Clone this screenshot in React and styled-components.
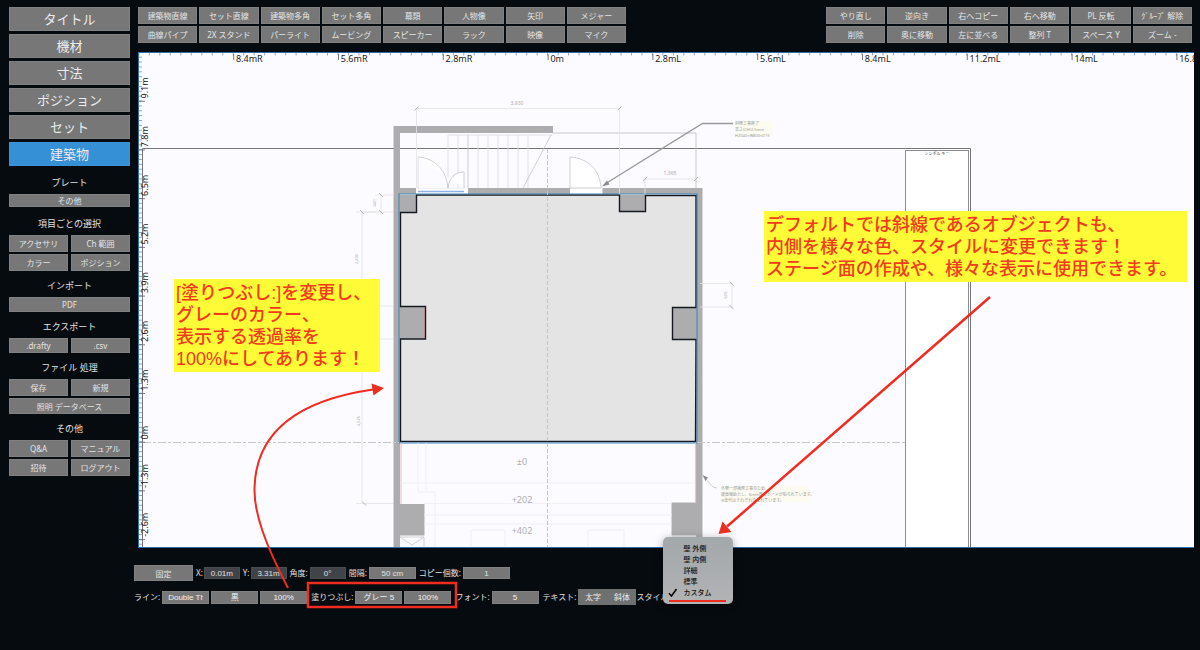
import { useState } from "react";
import styled, { createGlobalStyle } from "styled-components";

const GlobalStyle = createGlobalStyle`
	* {
		box-sizing: border-box;
	}
	body {
		margin: 0;
		background: #060b0f;
	}
	button,
	input,
	select {
		font-family: inherit;
		margin: 0;
	}
`;

const Page = styled.div`
	position: relative;
	display: flex;
	gap: 4px;
	min-height: 100vh;
	padding: 7px 6px 0 9px;
	background: #060b0f;
	color: #e0e0e0;
	font-family: "Noto Sans", "Noto Sans CJK JP", sans-serif;
	font-size: 8px;
	overflow: hidden;
`;

const Sidebar = styled.nav`
	flex: 0 0 121px;
`;

const Tabs = styled.div`
	display: grid;
	gap: 3px;
`;

const Tab = styled.button`
	height: 24px;
	padding: 0;
	border: 1px solid ${({ $active }) => ($active ? "#3a93d8" : "#808080")};
	background: ${({ $active }) => ($active ? "#3690d6" : "#777777")};
	color: #ececec;
	font-size: 13px;
	line-height: 18px;
	cursor: pointer;
`;

const SectionTitle = styled.h2`
	margin: 0;
	padding-top: ${({ $roomy }) => ($roomy ? "6px" : "4px")};
	font-size: 9px;
	font-weight: 400;
	line-height: 22px;
	text-align: center;
`;

const SectionGrid = styled.div`
	display: grid;
	grid-template-columns: 1fr 1fr;
	gap: 2px 3px;
`;

const Button = styled.button`
	height: ${({ $height }) => $height || 17}px;
	grid-column: ${({ $wide }) => ($wide ? "1 / -1" : "auto")};
	min-width: 0;
	padding: 0;
	border: 1px solid #808080;
	background: #777777;
	color: #e4e4e4;
	font-size: 8px;
	line-height: 11px;
	white-space: nowrap;
	cursor: pointer;
`;

const Main = styled.main`
	flex: 1;
	min-width: 0;
	display: flex;
	flex-direction: column;
`;

const Toolbar = styled.div`
	display: grid;
	grid-template-columns: 488fr 200fr 366fr;
	padding: 0 2px 0 4px;
	margin-bottom: 9px;
`;

const ToolGroup = styled.div`
	grid-column: ${({ $column }) => $column};
	display: grid;
	grid-template-columns: repeat(${({ $count }) => $count}, 1fr);
	gap: 2px;
`;

const Canvas = styled.section`
	flex: 1;
	min-height: 0;
	margin-left: 4px;
	border: 1px solid #2f6fae;
	border-right: none;
	background: #fcfbff;
	overflow: hidden;

	svg {
		display: block;
		width: 100%;
	}
`;

const Properties = styled.div`
	display: grid;
	gap: 8px;
	padding: 17px 0 45px;
`;

const PropertyRow = styled.div`
	display: flex;
	align-items: center;
	gap: ${({ $gap }) => $gap}px;
	height: 16px;
`;

const Field = styled.div`
	display: flex;
	align-items: center;
	gap: ${({ $tight }) => ($tight ? 1 : 2)}px;
	flex: none;
	line-height: 12px;
	white-space: nowrap;
`;

const TextBox = styled.input`
	width: ${({ $wide }) => ($wide ? 47 : 36)}px;
	height: 12px;
	padding: 0;
	border: 1px solid ${({ $wide }) => ($wide ? "#808080" : "#484c51")};
	background: ${({ $wide }) => ($wide ? "#777777" : "#404449")};
	color: #e0e0e0;
	font-family: "Liberation Sans", "Noto Sans CJK JP", sans-serif;
	font-size: 8px;
	text-align: center;
`;

const Select = styled.select`
	appearance: none;
	width: 47px;
	height: 13px;
	padding: 0 5px;
	border: 1px solid #808080;
	border-radius: 0;
	background: #777777;
	color: #f2f2f2;
	font-family: "Liberation Sans", "Noto Sans CJK JP", sans-serif;
	font-size: 8px;
	text-align: center;
	text-align-last: center;
`;

const PinButton = styled(Button)`
	width: 59px;
	height: 16px;
`;

const Toggles = styled.div`
	display: flex;
`;

const Toggle = styled.button`
	width: 29px;
	height: 16px;
	padding: 0;
	border: none;
	background: #6f7070;
	color: #ececec;
	font-size: 8px;
	line-height: 16px;
`;

const StyleField = styled.div`
	position: relative;
	display: flex;
	align-items: center;
	gap: 2px;
	margin-left: -4px;
	line-height: 12px;
`;

const Menu = styled.div`
	position: absolute;
	left: 27px;
	bottom: -1px;
	width: 70px;
	padding: 6px 0;
	border-radius: 5px;
	background: linear-gradient(#a3a8ab, #b2b3b5);
	box-shadow: 0 2px 8px rgba(0, 0, 0, 0.35);
`;

const MenuItem = styled.button`
	position: relative;
	display: block;
	width: 100%;
	height: 11px;
	padding: 0 0 0 20px;
	border: none;
	background: none;
	color: #111111;
	font-size: 7px;
	font-weight: 500;
	line-height: 11px;
	text-align: left;

	svg {
		position: absolute;
		left: 5px;
		top: 1px;
	}
`;

const Note = styled.p`
	position: absolute;
	left: ${({ $left }) => $left}px;
	top: ${({ $top }) => $top}px;
	width: ${({ $width }) => $width}px;
	margin: 0;
	padding: 3px 2px 2px;
	background: #fffb36;
	color: #f23a1d;
	font-family: "Liberation Sans", "Noto Sans CJK JP", sans-serif;
	font-size: 18px;
	font-weight: 500;
	line-height: 22px;
	white-space: nowrap;
`;

const Overlay = styled.svg`
	position: absolute;
	left: 0;
	top: 0;
	pointer-events: none;
`;

const tabs = ["タイトル", "機材", "寸法", "ポジション", "セット", "建築物"];

const sections = [
	{ title: "プレート", roomy: true, items: [{ label: "その他", wide: true, height: 13 }] },
	{
		title: "項目ごとの選択",
		roomy: true,
		items: [
			{ label: "アクセサリ" },
			{ label: "Ch 範囲" },
			{ label: "カラー" },
			{ label: "ポジション" },
		],
	},
	{ title: "インポート", items: [{ label: "PDF", wide: true, height: 15 }] },
	{
		title: "エクスポート",
		items: [
			{ label: ".drafty", height: 15 },
			{ label: ".csv", height: 15 },
		],
	},
	{
		title: "ファイル 処理",
		items: [
			{ label: "保存" },
			{ label: "新規" },
			{ label: "照明 データベース", wide: true, height: 16 },
		],
	},
	{
		title: "その他",
		items: [
			{ label: "Q&A" },
			{ label: "マニュアル" },
			{ label: "招待" },
			{ label: "ログアウト" },
		],
	},
];

const drawTools = [
	"建築物直線", "セット直線", "建築物多角", "セット多角", "幕類", "人物像", "矢印", "メジャー",
	"曲線パイプ", "2X スタンド", "パーライト", "ムービング", "スピーカー", "ラック", "映像", "マイク",
];

const editTools = [
	"やり直し", "逆向き", "右へコピー", "右へ移動", "PL 反転", "ｸﾞﾙｰﾌﾟ 解除",
	"削除", "奥に移動", "左に並べる", "整列 T", "スペース Y", "ズーム -",
];

const styleOptions = ["壁 外側", "壁 内側", "詳細", "標準", "カスタム"];

const topLabels = ["8.4mR", "5.6mR", "2.8mR", "0m", "2.8mL", "5.6mL", "8.4mL", "11.2mL", "14mL", "16.8mL"];
const sideLabels = ["9.1m", "7.8m", "6.5m", "5.2m", "3.9m", "2.6m", "1.3m", "0m", "-1.3m", "-2.6m"];

function Rulers() {
	const topTicks = Array.from({ length: 101 }, (_, i) => 138.9 + i * 10.48);
	const sideTicks = Array.from({ length: 101 }, (_, i) => 57.2 + i * 4.87);

	return (
		<g fontSize="9" fill="#1c1c1c">
			{topTicks.map((x) => (
				<path key={x} d={`M${x} 53v2.5`} stroke="#6f8aa8" strokeWidth="0.7" />
			))}
			{sideTicks.map((y) => (
				<path key={y} d={`M139 ${y}h3`} stroke="#6f7f98" strokeWidth="0.7" />
			))}
			{topLabels.map((label, i) => (
				<g key={label}>
					<path d={`M${233.7 + i * 104.8} 54v6`} stroke="#555" strokeWidth="0.8" />
					<text x={236 + i * 104.8} y="61.5">
						{label}
					</text>
				</g>
			))}
			{sideLabels.map((label, i) => (
				<g key={label}>
					<path d={`M139 ${101.3 + i * 48.7}h6`} stroke="#666" strokeWidth="0.8" />
					<text transform={`translate(147.5 ${98.5 + i * 48.7}) rotate(-90)`}>{label}</text>
				</g>
			))}
		</g>
	);
}

function FloorPlan() {
	return (
		<svg viewBox="139 53 1055 494" preserveAspectRatio="xMinYMin slice">
			{/* sheet frame and symbol key */}
			<path d="M142.5 547V148.500H970.500V547M968.500 547V150" fill="none" stroke="#77777b" />
			<rect x="905.5" y="150.5" width="63" height="420" fill="#fff" stroke="#8d8d92" />
			<text x="937" y="155" fontSize="4" textAnchor="middle" fill="#444">
				シンボル キー
			</text>

			{/* stairs and doors */}
			<g fill="none" stroke="#dcdbe0" strokeWidth="0.8">
				<path d="M448 135H552M448 135V188M458 135V188M478 135V188M488 135V188M498 135V188M508 135V188M518 135V188M528 135V188" />
				<path d="M468 135V188" stroke="#c4c4c8" />
				<path d="M551 135L522 190" stroke="#c4c4c8" />
				<path d="M418 157C436 158 447 172 448 188C449 178 455 172 464 172V188" stroke="#c4c4c8" fill="#fff" />
				<path d="M418 157V189H466" />
				<path d="M570 157C588 158 600 170 601 188H570Z" stroke="#c4c4c8" fill="#fff" />
				<path d="M553 133H696V190" stroke="#bbbbc0" />
			</g>

			{/* walls */}
			<g fill="#adadaf">
				<path d="M393.5 126H553V133H400V188H416V194H400V547H393.5Z" />
				<path d="M468 188H570V194H468Z" />
				<path d="M602.5 188H702.5V538H696V194H602.5Z" />
				<path d="M400 504H424.5V535.5H400ZM671.5 502.5H696V535.5H671.5Z" />
			</g>
			<path d="M416 189H468V194H416ZM570 189H602V194H570Z" fill="#fff" />
			<path d="M418 191.5H464" stroke="#8fb1e8" strokeWidth="1.5" />

			{/* pillars, then the stage area cut around them */}
			<path d="M400 195H417V213H400ZM619 195H646V212H619ZM400 306H426V339H400ZM672 307H696V340H672Z" fill="#adadaf" />
			<path
				d="M416.5 195H619.5V211.5H645.5V195.5H696V307.5H672.5V339.5H696L695.5 441.5H400.5V339H425.5V306.5H400.5V212.5H416.5Z"
				fill="#e4e4e4"
				stroke="#161a20"
				strokeWidth="1.4"
			/>
			<path d="M424.500 307.500V338" stroke="#b98483" strokeWidth="0.8" />
			<rect x="399" y="194" width="298" height="249" fill="none" stroke="#3c83b8" />

			{/* lower floor */}
			<path d="M401 443V504M695.5 443V503" stroke="#f3c4c6" strokeWidth="1.2" />
			<g fill="none" stroke="#efeef3" strokeWidth="0.8">
				<path d="M401 483H695M424 503.5H672M424 515H672M424 524H672M418 443V492H435V547M426 443V490M471 547V530H505V547M588 547V530H624V547" />
				<path d="M400 537H424V547M400 537L412 545L424 537" stroke="#c8c8cc" />
				<path d="M672 537H697V547" stroke="#c8c8cc" />
			</g>
			<g fontSize="9" fill="#adadb2" textAnchor="middle">
				<text x="522" y="465">±0</text>
				<text x="522" y="503">+202</text>
				<text x="522" y="534">+402</text>
			</g>

			{/* centre lines */}
			<path d="M547.5 149V547" stroke="#c4c4c9" strokeDasharray="4 2" fill="none" />
			<path d="M143 442.5H399M697 442.5H905" stroke="#c6c6cc" strokeDasharray="8 2 3 2" />

			{/* dimensions */}
			<g fill="none" stroke="#e3e2e8" strokeWidth="0.8">
				<path d="M416.5 188V108.5H619.5V194M645 194V179H697M381 195V212H362V501M356 503.5H393M375 195H393M356 212H393M362 306H393M362 339H393M700 283.5H732V307H700" />
			</g>
			<path
				d="M414.5 110.5l4-4M617.5 110.5l4-4M643 181l4-4M694 181l4-4M379 193l4 4M379 210l4 4M360 210l4 4M362 501.5l4 4M729.5 281.5l4 4M729.5 305l4 4"
				stroke="#b4b4ba"
			/>
			<g fontSize="4" fill="#aaaab0" textAnchor="middle">
				<text x="517" y="105" fontSize="5">3,930</text>
				<text x="670" y="175" fontSize="5">1,365</text>
				<text transform="translate(376 203) rotate(-90)">440</text>
				<text transform="translate(358 259) rotate(-90)">2,430</text>
				<text transform="translate(360 421) rotate(-90)">4,575</text>
				<text transform="translate(727 295) rotate(-90)">605</text>
			</g>

			{/* leader notes */}
			<rect x="735" y="121" width="38" height="15" fill="#fcfbf0" />
			<rect x="721" y="486" width="88" height="16" fill="#fdfbf0" />
			<path d="M733 123.5H702.5L605 184" fill="none" stroke="#97979c" strokeWidth="1.3" />
			<path d="M602 186.500L607 180.500L609.500 184.500Z" fill="#8b8b90" />
			<path d="M717 488L713 487L704 477" fill="none" stroke="#cfcfd4" />
			<path d="M702.500 475L708 477.500L705.500 481Z" fill="#8b8b90" />
			<g fontSize="4" fill="#9b9b98">
				<text x="735" y="125">斜壁工事終了</text>
				<text x="735" y="131">高さ(CH)2.5mm</text>
				<text x="735" y="137">H2040×W800×D15</text>
				<text x="721" y="490">外壁一部補修工事のため、</text>
				<text x="721" y="496">緩衝補助とし、6mm厚のボードが貼られています。</text>
				<text x="721" y="502">※塗代はそれぞれ含まれています。</text>
			</g>

			<Rulers />
		</svg>
	);
}

function PropertySelect({ label, options }) {
	return (
		<Select aria-label={label}>
			{options.map((option) => (
				<option key={option}>{option}</option>
			))}
		</Select>
	);
}

function StyleMenu({ value, onChange }) {
	return (
		<Menu>
			{styleOptions.map((option) => (
				<MenuItem key={option} onClick={() => onChange(option)}>
					{option === value && (
						<svg width="10" height="9" viewBox="0 0 10 9">
							<path d="M1 5.200L3.500 8L8.500 1" fill="none" stroke="#0b0b0b" strokeWidth="1.600" />
						</svg>
					)}
					{option}
				</MenuItem>
			))}
		</Menu>
	);
}

function App() {
	const [activeTab, setActiveTab] = useState("建築物");
	const [objectStyle, setObjectStyle] = useState("カスタム");

	return (
		<Page lang="ja">
			<GlobalStyle />
			<Sidebar>
				<Tabs>
					{tabs.map((tab) => (
						<Tab key={tab} $active={tab === activeTab} onClick={() => setActiveTab(tab)}>
							{tab}
						</Tab>
					))}
				</Tabs>
				{sections.map((section) => (
					<section key={section.title}>
						<SectionTitle $roomy={section.roomy}>{section.title}</SectionTitle>
						<SectionGrid>
							{section.items.map((item) => (
								<Button key={item.label} $wide={item.wide} $height={item.height}>
									{item.label}
								</Button>
							))}
						</SectionGrid>
					</section>
				))}
			</Sidebar>

			<Main>
				<Toolbar>
					<ToolGroup $column={1} $count={8}>
						{drawTools.map((tool) => (
							<Button key={tool}>{tool}</Button>
						))}
					</ToolGroup>
					<ToolGroup $column={3} $count={6}>
						{editTools.map((tool) => (
							<Button key={tool}>{tool}</Button>
						))}
					</ToolGroup>
				</Toolbar>

				<Canvas>
					<FloorPlan />
				</Canvas>

				<Properties>
					<PropertyRow $gap={3}>
						<PinButton>固定</PinButton>
						<Field $tight>
							<label htmlFor="pos-x">X:</label>
							<TextBox id="pos-x" defaultValue="0.01m" />
						</Field>
						<Field $tight>
							<label htmlFor="pos-y">Y:</label>
							<TextBox id="pos-y" defaultValue="3.31m" />
						</Field>
						<Field>
							<label htmlFor="angle">角度:</label>
							<TextBox id="angle" defaultValue="0°" />
						</Field>
						<Field>
							<label htmlFor="spacing">間隔:</label>
							<TextBox id="spacing" $wide defaultValue="50 cm" />
						</Field>
						<Field>
							<label htmlFor="copies">コピー個数:</label>
							<TextBox id="copies" $wide defaultValue="1" />
						</Field>
					</PropertyRow>
					<PropertyRow $gap={4}>
						<Field>
							<span>ライン:</span>
							<PropertySelect label="ライン 種類" options={["Double Thin"]} />
							<PropertySelect label="ライン カラー" options={["黒"]} />
							<PropertySelect label="ライン 透過率" options={["100%"]} />
						</Field>
						<Field>
							<span>塗りつぶし:</span>
							<PropertySelect label="塗りつぶし カラー" options={["グレー 5"]} />
							<PropertySelect label="塗りつぶし 透過率" options={["100%"]} />
						</Field>
						<Field>
							<span>フォント:</span>
							<PropertySelect label="フォント" options={["5"]} />
						</Field>
						<Field>
							<span>テキスト:</span>
							<Toggles>
								<Toggle>太字</Toggle>
								<Toggle>斜体</Toggle>
							</Toggles>
						</Field>
						<StyleField>
							<span>スタイル:</span>
							<StyleMenu value={objectStyle} onChange={setObjectStyle} />
						</StyleField>
					</PropertyRow>
				</Properties>
			</Main>

			<Note $left={174} $top={279} $width={206}>
				[塗りつぶし:]を変更し、
				<br />
				グレーのカラー、
				<br />
				表示する透過率を
				<br />
				100%にしてあります！
			</Note>
			<Note $left={764} $top={211} $width={423}>
				デフォルトでは斜線であるオブジェクトも、
				<br />
				内側を様々な色、スタイルに変更できます！
				<br />
				ステージ面の作成や、様々な表示に使用できます。
			</Note>

			<Overlay width="1200" height="650" viewBox="0 0 1200 650">
				<g fill="none" stroke="#ee2c20" strokeWidth="2">
					<path d="M288 588C264 542 254 512 254.500 488C256 430 300 400 373 389.500" />
					<path d="M990 297L727 526.500" strokeWidth="2.500" />
					<path d="M669 601H726" />
					<rect x="308" y="583" width="148" height="24" strokeWidth="2.500" />
				</g>
				<path d="M384 388L371.500 383.500L373.500 395.500Z" fill="#ee2c20" />
				<path d="M718.500 534L722.500 521.500L731.500 532Z" fill="#ee2c20" />
			</Overlay>
		</Page>
	);
}

export default App;
